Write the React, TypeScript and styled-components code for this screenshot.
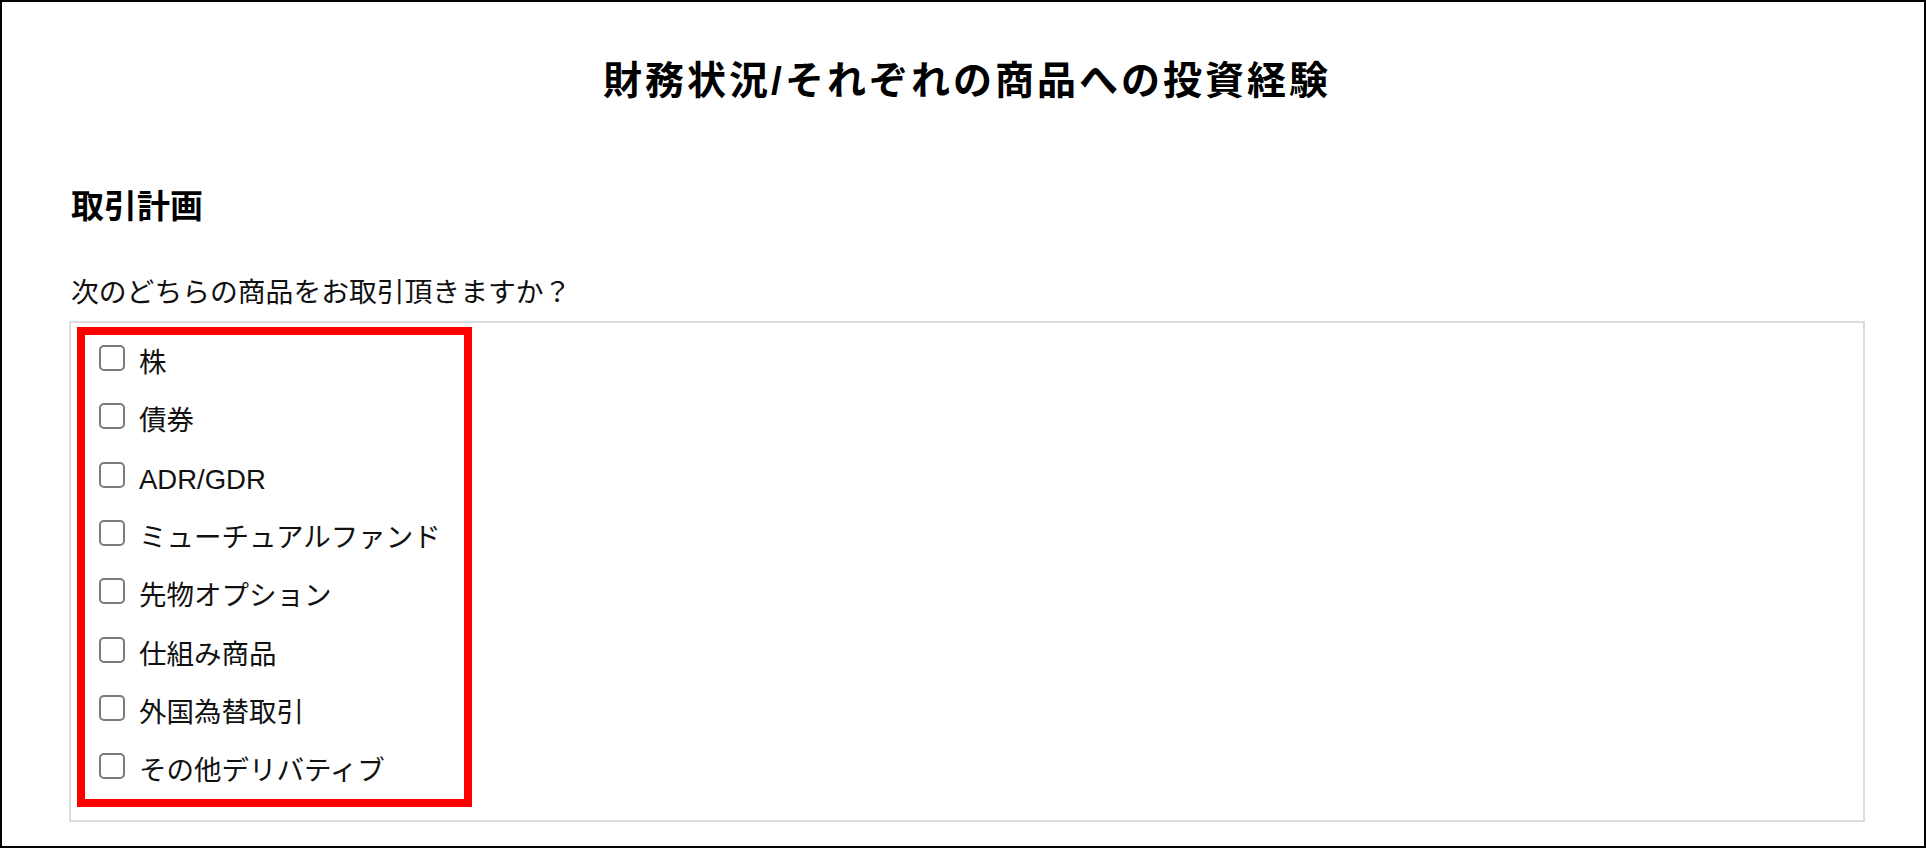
import React from "react";
import styled, { createGlobalStyle } from "styled-components";

const GlobalStyle = createGlobalStyle`
  html, body {
    margin: 0;
    padding: 0;
    background: #ffffff;
  }
  body {
    font-family: "Liberation Sans", "Noto Sans CJK JP", sans-serif;
    color: #000000;
  }
  * { box-sizing: border-box; }
`;

const Frame = styled.div`
  width: 1926px;
  height: 848px;
  border: 2px solid #000000;
  padding: 0 59px 0 67px;
  display: flex;
  flex-direction: column;
  overflow: hidden;
`;

const Title = styled.h1`
  margin: 59px 0 0 0;
  font-family: "Liberation Sans", "Noto Sans CJK JP", sans-serif;
  font-size: 39px;
  line-height: 40px;
  font-weight: 700;
  letter-spacing: 3px;
  text-align: center;
  color: #000000;
`;

const SectionHeading = styled.h2`
  margin: 88px 0 0 2px;
  font-family: "Liberation Sans", "Noto Sans CJK JP", sans-serif;
  font-size: 33px;
  line-height: 36px;
  font-weight: 700;
  color: #000000;
`;

const Question = styled.p`
  margin: 53px 0 0 2px;
  font-size: 27.8px;
  line-height: 30px;
  color: #111111;
`;

const Panel = styled.div`
  margin-top: 13px;
  height: 501px;
  border: 2px solid #dcdcdc;
  padding: 4px 0 0 6px;
`;

const Highlight = styled.div`
  width: 395px;
  border: 8px solid #ff0000;
  padding: 10px 0 20px 14px;
  display: flex;
  flex-direction: column;
  gap: 32.33px;
`;

const Option = styled.label`
  display: flex;
  align-items: flex-start;
  gap: 14px;
  height: 26px;
  cursor: pointer;
`;

const Box = styled.input.attrs({ type: "checkbox" })`
  appearance: none;
  -webkit-appearance: none;
  margin: 0;
  flex: none;
  width: 26px;
  height: 26px;
  border: 2px solid #7b7b7b;
  border-radius: 5px;
  background: #ffffff;
`;

const OptionText = styled.span`
  font-size: 27.5px;
  line-height: 26px;
  padding-top: 5px;
  color: #111111;
  white-space: nowrap;
`;

const options = [
  "株",
  "債券",
  "ADR/GDR",
  "ミューチュアルファンド",
  "先物オプション",
  "仕組み商品",
  "外国為替取引",
  "その他デリバティブ",
];

export default function App() {
  return (
    <>
      <GlobalStyle />
      <Frame>
        <Title>財務状況/それぞれの商品への投資経験</Title>
        <SectionHeading>取引計画</SectionHeading>
        <Question>次のどちらの商品をお取引頂きますか？</Question>
        <Panel>
          <Highlight>
            {options.map((o) => (
              <Option key={o}>
                <Box />
                <OptionText>{o}</OptionText>
              </Option>
            ))}
          </Highlight>
        </Panel>
      </Frame>
    </>
  );
}
